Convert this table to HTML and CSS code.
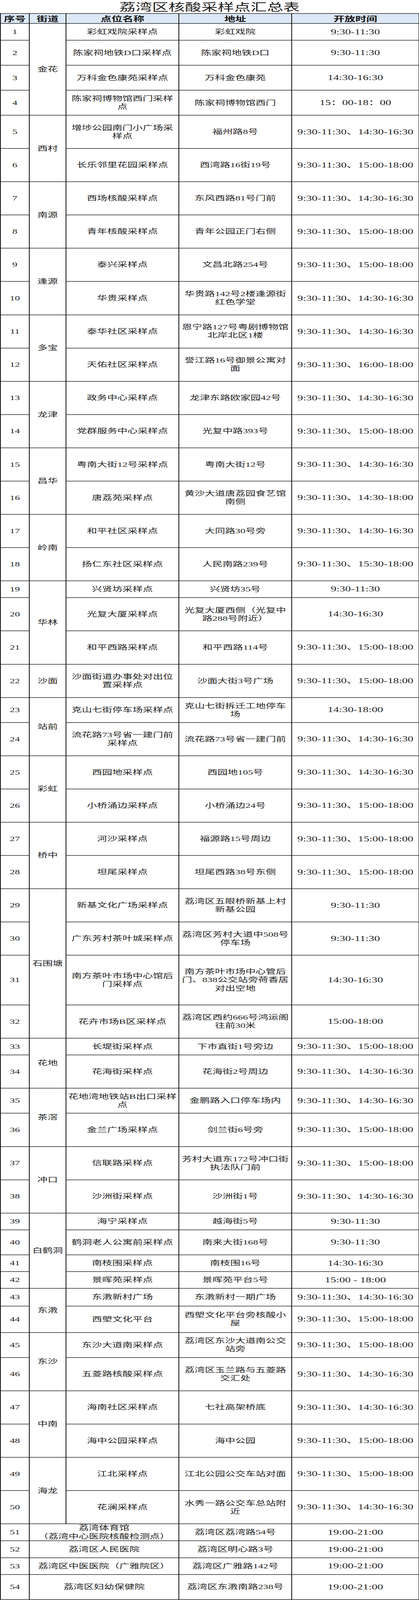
FILE: index.html
```html
<!DOCTYPE html>
<html lang="zh-CN">
<head>
<meta charset="utf-8">
<title>荔湾区核酸采样点汇总表</title>
<link rel="stylesheet" href="styles.css">
</head>
<body>
<div class="viewport">
<div class="page">
<div class="title">荔湾区核酸采样点汇总表</div>
<table class="sheet">
<colgroup>
<col class="c-no"><col class="c-street"><col class="c-name"><col class="c-addr"><col class="c-time">
</colgroup>
<thead>
<tr class="head"><th>序号</th><th>街道</th><th>点位名称</th><th>地址</th><th>开放时间</th></tr>
</thead>
<tbody>
<tr class="h2"><td class="no">1</td><td class="st" rowspan="4">金花</td><td>彩虹戏院采样点</td><td>彩虹戏院</td><td class="tm">9:30-11:30</td></tr>
<tr class="h3"><td class="no">2</td><td>陈家祠地铁D口采样点</td><td>陈家祠地铁D口</td><td class="tm">9:30-11:30</td></tr>
<tr class="h3"><td class="no">3</td><td>万科金色康苑采样点</td><td>万科金色康苑</td><td class="tm">14:30-16:30</td></tr>
<tr class="h3"><td class="no">4</td><td>陈家祠博物馆西门采样点</td><td>陈家祠博物馆西门</td><td class="tm">15：00-18：00</td></tr>
<tr class="h4"><td class="no">5</td><td class="st" rowspan="2">西村</td><td>增埗公园南门小广场采样点</td><td>福州路8号</td><td class="tm">9:30-11:30、14:30-16:30</td></tr>
<tr class="h4"><td class="no">6</td><td>长乐邻里花园采样点</td><td>西湾路16街19号</td><td class="tm">9:30-11:30、15:00-18:00</td></tr>
<tr class="h4"><td class="no">7</td><td class="st" rowspan="2">南源</td><td>西场核酸采样点</td><td>东风西路81号门前</td><td class="tm">9:30-11:30、14:30-16:30</td></tr>
<tr class="h4"><td class="no">8</td><td>青年核酸采样点</td><td>青年公园正门右侧</td><td class="tm">9:30-11:30、15:00-18:00</td></tr>
<tr class="h4"><td class="no">9</td><td class="st" rowspan="2">逢源</td><td>泰兴采样点</td><td>文昌北路254号</td><td class="tm">9:30-11:30、15:00-18:00</td></tr>
<tr class="h4"><td class="no">10</td><td>华贵采样点</td><td>华贵路142号2楼逢源街红色学堂</td><td class="tm">9:30-11:30、14:30-16:30</td></tr>
<tr class="h4"><td class="no">11</td><td class="st" rowspan="2">多宝</td><td>泰华社区采样点</td><td>恩宁路127号粤剧博物馆北岸北区1楼</td><td class="tm">9:30-11:30、14:30-16:30</td></tr>
<tr class="h4"><td class="no">12</td><td>天佑社区采样点</td><td>誉江路16号御景公寓对面</td><td class="tm">9:30-11:30、16:00-18:00</td></tr>
<tr class="h4"><td class="no">13</td><td class="st" rowspan="2">龙津</td><td>政务中心采样点</td><td>龙津东路欧家园42号</td><td class="tm">9:30-11:30、14:30-16:30</td></tr>
<tr class="h4"><td class="no">14</td><td>党群服务中心采样点</td><td>光复中路393号</td><td class="tm">9:30-11:30、15:00-18:00</td></tr>
<tr class="h4"><td class="no">15</td><td class="st" rowspan="2">昌华</td><td>粤南大街12号采样点</td><td>粤南大街12号</td><td class="tm">9:30-11:30、14:30-16:30</td></tr>
<tr class="h4"><td class="no">16</td><td>唐荔苑采样点</td><td>黄沙大道唐荔园食艺馆南侧</td><td class="tm">9:30-11:30、14:30-18:00</td></tr>
<tr class="h4"><td class="no">17</td><td class="st" rowspan="2">岭南</td><td>和平社区采样点</td><td>大同路30号旁</td><td class="tm">9:30-11:30、14:30-16:30</td></tr>
<tr class="h4"><td class="no">18</td><td>扬仁东社区采样点</td><td>人民南路239号</td><td class="tm">9:30-11:30、15:30-18:00</td></tr>
<tr class="h2"><td class="no">19</td><td class="st" rowspan="3">华林</td><td>兴贤坊采样点</td><td>兴贤坊35号</td><td class="tm">9:30-11:30</td></tr>
<tr class="h4"><td class="no">20</td><td>光复大厦采样点</td><td>光复大厦西侧（光复中路288号附近）</td><td class="tm">14:30-16:30</td></tr>
<tr class="h4"><td class="no">21</td><td>和平西路采样点</td><td>和平西路114号</td><td class="tm">9:30-11:30、15:00-18:00</td></tr>
<tr class="h4"><td class="no">22</td><td class="st">沙面</td><td>沙面街道办事处对出位置采样点</td><td>沙面大街3号广场</td><td class="tm">9:30-11:30、15:00-18:00</td></tr>
<tr class="h3"><td class="no">23</td><td class="st" rowspan="2">站前</td><td>克山七街停车场采样点</td><td>克山七街拆迁工地停车场</td><td class="tm">14:30-18:00</td></tr>
<tr class="h4"><td class="no">24</td><td>流花路73号省一建门前采样点</td><td>流花路73号省一建门前</td><td class="tm">9:30-11:30、14:30-16:30</td></tr>
<tr class="h4"><td class="no">25</td><td class="st" rowspan="2">彩虹</td><td>西园地采样点</td><td>西园地105号</td><td class="tm">9:30-11:30、14:30-16:30</td></tr>
<tr class="h4"><td class="no">26</td><td>小桥涌边采样点</td><td>小桥涌边24号</td><td class="tm">9:30-11:30、15:00-18:00</td></tr>
<tr class="h4"><td class="no">27</td><td class="st" rowspan="2">桥中</td><td>河沙采样点</td><td>福源路15号周边</td><td class="tm">9:30-11:30、15:00-18:00</td></tr>
<tr class="h4"><td class="no">28</td><td>坦尾采样点</td><td>坦尾西路38号东侧</td><td class="tm">9:30-11:30、15:00-18:00</td></tr>
<tr class="h4"><td class="no">29</td><td class="st" rowspan="4">石围塘</td><td>新基文化广场采样点</td><td>荔湾区五眼桥新基上村新基公园</td><td class="tm">9:30-11:30</td></tr>
<tr class="h4"><td class="no">30</td><td>广东芳村茶叶城采样点</td><td>荔湾区芳村大道中508号停车场</td><td class="tm">9:30-11:30</td></tr>
<tr class="h6"><td class="no">31</td><td>南方茶叶市场中心馆后门采样点</td><td>南方茶叶市场中心管后门、838公交站旁荷香居对出空地</td><td class="tm">14:30-16:30</td></tr>
<tr class="h4"><td class="no">32</td><td>花卉市场B区采样点</td><td>荔湾区西约666号鸿运阁往前30米</td><td class="tm">15:00-18:00</td></tr>
<tr class="h2"><td class="no">33</td><td class="st" rowspan="2">花地</td><td>长堤街采样点</td><td>下市直街1号旁边</td><td class="tm">9:30-11:30、15:00-18:00</td></tr>
<tr class="h4"><td class="no">34</td><td>花海街采样点</td><td>花海街2号周边</td><td class="tm">9:30-11:30、14:30-16:30</td></tr>
<tr class="h3"><td class="no">35</td><td class="st" rowspan="2">茶滘</td><td>花地湾地铁站B出口采样点</td><td>金鹏路入口停车场内</td><td class="tm">9:30-11:30、14:30-16:30</td></tr>
<tr class="h4"><td class="no">36</td><td>金兰广场采样点</td><td>剑兰街6号旁</td><td class="tm">9:30-11:30、15:00-18:00</td></tr>
<tr class="h4"><td class="no">37</td><td class="st" rowspan="2">冲口</td><td>信联路采样点</td><td>芳村大道东172号冲口街执法队门前</td><td class="tm">9:30-11:30、15:00-18:00</td></tr>
<tr class="h4"><td class="no">38</td><td>沙洲街采样点</td><td>沙洲街1号</td><td class="tm">9:30-11:30、14:30-16:30</td></tr>
<tr class="h2"><td class="no">39</td><td class="st" rowspan="4">白鹤洞</td><td>海宁采样点</td><td>越海街5号</td><td class="tm">9:30-11:30</td></tr>
<tr class="h3"><td class="no">40</td><td>鹤洞老人公寓前采样点</td><td>南来大街168号</td><td class="tm">9:30-11:30</td></tr>
<tr class="h2"><td class="no">41</td><td>南枝围采样点</td><td>南枝围16号</td><td class="tm">14:30-16:30</td></tr>
<tr class="h2"><td class="no">42</td><td>景晖苑采样点</td><td>景晖苑平台5号</td><td class="tm">15:00 - 18:00</td></tr>
<tr class="h43"><td class="no">43</td><td class="st" rowspan="2">东漖</td><td>东漖新村广场</td><td>东漖新村一期广场</td><td class="tm">9:30-11:30、14:30-16:30</td></tr>
<tr class="h44"><td class="no">44</td><td>西塱文化平台</td><td>西塱文化平台旁核酸小屋</td><td class="tm">9:30-11:30、15:00-18:00</td></tr>
<tr class="h3"><td class="no">45</td><td class="st" rowspan="2">东沙</td><td>东沙大道南采样点</td><td>荔湾区东沙大道南公交站旁</td><td class="tm">9:30-11:30、15:00-18:00</td></tr>
<tr class="h4"><td class="no">46</td><td>五菱路核酸采样点</td><td>荔湾区玉兰路与五菱路交汇处</td><td class="tm">9:30-11:30、14:30-16:30</td></tr>
<tr class="h4"><td class="no">47</td><td class="st" rowspan="2">中南</td><td>海南社区采样点</td><td>七社高架桥底</td><td class="tm">9:30-11:30、14:30-16:30</td></tr>
<tr class="h4"><td class="no">48</td><td>海中公园采样点</td><td>海中公园</td><td class="tm">9:30-11:30、15:00-18:00</td></tr>
<tr class="h4"><td class="no">49</td><td class="st" rowspan="2">海龙</td><td>江北采样点</td><td>江北公园公交车站对面</td><td class="tm">9:30-11:30、15:00-18:00</td></tr>
<tr class="h4"><td class="no">50</td><td>花澜采样点</td><td>水秀一路公交车总站附近</td><td class="tm">9:30-11:30、14:30-16:30</td></tr>
<tr class="h2"><td class="no">51</td><td colspan="2">荔湾体育馆<br>（荔湾中心医院核酸检测点）</td><td>荔湾区荔湾路54号</td><td class="tm">19:00-21:00</td></tr>
<tr class="h52"><td class="no">52</td><td colspan="2">荔湾区人民医院</td><td>荔湾区明心路3号</td><td class="tm">19:00-21:00</td></tr>
<tr class="h2"><td class="no">53</td><td colspan="2">荔湾区中医医院（广雅院区）</td><td>荔湾区广雅路142号</td><td class="tm">19:00-21:00</td></tr>
<tr class="h3"><td class="no">54</td><td colspan="2">荔湾区妇幼保健院</td><td>荔湾区东漖南路238号</td><td class="tm">19:00-21:00</td></tr>
</tbody>
</table>
</div>
</div>
<script src="fit.js"></script>
</body>
</html>
```

FILE: fit.js
```js
(function () {
  // The sheet is drawn at the reference's full height (6402px); if the
  // browser window is shorter, squeeze it vertically so the whole sheet
  // stays inside the photographed frame.
  var full = 6402;
  var h = window.innerHeight;
  var s = h > 0 && h < full ? h / full : 1;
  document.documentElement.style.setProperty('--fit', String(s));
})();
```

FILE: styles.css
```css
html, body {
  margin: 0;
  padding: 0;
  background: #ffffff;
}

body {
  color: #1e1e1e;
  font-family: "Liberation Serif", "Noto Sans CJK SC", serif;
}

.viewport {
  height: 100vh;
  overflow: hidden;
}

.page {
  width: 1073px;
  transform-origin: 0 0;
  transform: scaleY(var(--fit, 1));
}

.title {
  height: 47px;
  padding-top: 6px;
  line-height: 47px;
  text-align: center;
  font-family: "Liberation Serif", "Noto Sans CJK SC", serif;
  font-size: 42px;
  font-weight: 400;
  color: #1a1a1a;
}

.sheet {
  width: 1072px;
  table-layout: fixed;
  border-collapse: collapse;
  margin: 0;
}

.c-no { width: 74px; }
.c-street { width: 94px; }
.c-name { width: 289px; }
.c-addr { width: 289px; }
.c-time { width: 326px; }

.sheet th,
.sheet td {
  border: 2px solid #0a0a0a;
  padding: 0 3px;
  text-align: center;
  vertical-align: middle;
  font-size: 26px;
  line-height: 33px;
  font-weight: 400;
}

.sheet th {
  background: #dce8f5;
  font-family: "Noto Sans CJK SC", sans-serif;
  font-weight: 700;
  font-size: 28px;
  line-height: 36px;
  padding: 0;
  color: #111;
}

.head { height: 40px; }

.sheet td.no { padding: 0; }
.sheet td.st { padding: 0; }

.sheet td.tm {
  font-size: 29px;
  padding: 0 2px;
  white-space: nowrap;
}

.h2 { height: 67px; }
.h3 { height: 100px; }
.h4 { height: 133.1px; }
.h6 { height: 199px; }
.h43 { height: 71px; }
.h44 { height: 106px; }
.h52 { height: 68px; }
```
